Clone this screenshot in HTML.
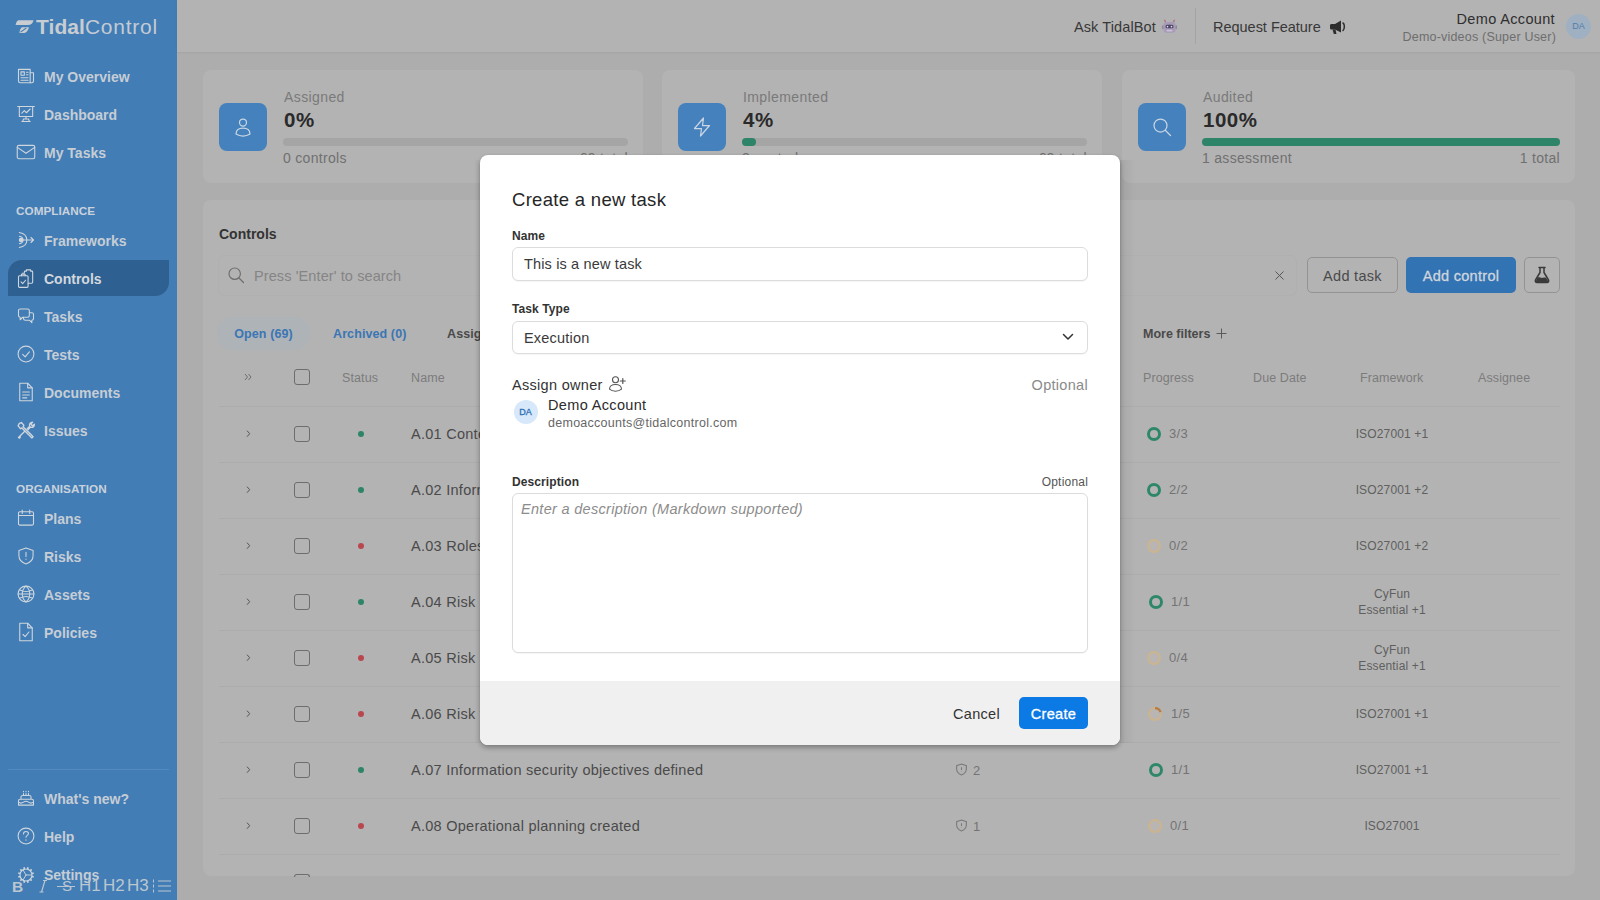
<!DOCTYPE html>
<html><head><meta charset="utf-8">
<style>
*{box-sizing:border-box;margin:0;padding:0}
html,body{width:1600px;height:900px;overflow:hidden}
body{font-family:"Liberation Sans",sans-serif;background:#adadad;position:relative;color:#2b2b2b}
.abs{position:absolute}
/* sidebar */
#side{position:absolute;left:0;top:0;width:177px;height:900px;background:#427db5}
.nav{position:absolute;left:0;width:177px;height:36px;color:#c6cdd5;font-weight:bold;font-size:14px;line-height:36px;padding-left:44px;letter-spacing:0}
.nav svg{position:absolute;left:16px;top:7px;width:20px;height:20px;stroke:#cfd6de;fill:none;stroke-width:1.3;stroke-linecap:round;stroke-linejoin:round}
.nav.act{left:8px;width:161px;background:#2e6091;border-radius:14px 0 14px 0;padding-left:36px;color:#d3d8de;line-height:38px}
.nav.act svg{left:8px}
.sec{position:absolute;left:16px;color:#c9d2dc;font-weight:bold;font-size:11.7px;letter-spacing:.05px}
/* header */
#hdr{position:absolute;left:177px;top:0;width:1423px;height:52px;background:#b3b3b3;box-shadow:0 1px 2px rgba(0,0,0,.06)}
.card{position:absolute;background:#b3b3b3;border-radius:8px}
.ib{position:absolute;width:48px;height:48px;border-radius:8px;background:#4481bd}
.ib svg{position:absolute;left:12px;top:12px;width:24px;height:24px;stroke:#c9d6e3;fill:none;stroke-width:1.25;stroke-linecap:round;stroke-linejoin:round}
.lbl{position:absolute;font-size:14px;color:#7a7a7a;letter-spacing:.4px;margin:1px 0 0 1px}
.pct{position:absolute;font-size:20.5px;font-weight:bold;color:#2a2a2a;letter-spacing:.5px;margin:0 0 0 1px}
.bar{position:absolute;height:8px;border-radius:4px;background:#a5a5a5}
.bar i{position:absolute;left:0;top:0;height:8px;border-radius:4px;background:#2e8468}
.sub{position:absolute;font-size:14px;color:#707070;letter-spacing:.3px;margin-top:.4px}
.th{position:absolute;font-size:12.5px;color:#7c7c7c;top:371px;letter-spacing:.1px}
.row{position:absolute;left:219px;width:1341px;height:1px;background:#acacac}
.cb{position:absolute;left:294px;width:16px;height:16px;border:1.2px solid #6d6d6d;border-radius:3px}
.chev{position:absolute;left:245px;font-size:11px;color:#555}
.dot{position:absolute;left:358px;width:6px;height:6px;border-radius:3px}
.g{background:#2e8468}.r{background:#b8474e}
.nm{position:absolute;left:411px;font-size:14.5px;color:#4a4a4a;letter-spacing:.27px;margin-top:1px}
.pg{position:absolute;left:1170px;font-size:13px;color:#737373;letter-spacing:.3px;margin-top:.4px}
.fw{position:absolute;left:1330px;width:124px;text-align:center;font-size:12px;color:#5f5f5f;line-height:16px;letter-spacing:.15px}
.ring{position:absolute;width:14px;height:14px;border-radius:50%;border:3px solid #2e8769}
.ring.o{border-color:#ccb48e;border-width:2.5px;background:#b9b5b2}
/* modal */
#modal{position:absolute;left:480px;top:155px;width:640px;height:590px;background:#fff;border-radius:8px;box-shadow:0 3px 5px rgba(0,0,0,.28),0 0 2px rgba(0,0,0,.08);overflow:hidden}
#mfoot{position:absolute;left:0;top:526px;width:640px;height:64px;background:#f0f0f0}
.ml{position:absolute;left:32px;font-size:12px;font-weight:bold;color:#333;letter-spacing:.1px}
.inp{position:absolute;left:32px;width:576px;border:1px solid #dcdcdc;border-radius:6px;background:#fff;box-shadow:0 1px 1px rgba(0,0,0,.04)}
</style></head><body>
<div id="side">
<svg class="abs" style="left:15px;top:19px" width="19" height="16" viewBox="0 0 18 16" preserveAspectRatio="none"><path d="M3.2 1.2h14.3c-.5 3-2.3 4.8-5.3 4.8H.6C1 3.6 1.6 1.9 3.2 1.2z" fill="#c9cdd2"/><path d="M6.6 8.2h6.6c-.7 3.4-2.6 5.9-5.6 5.9H4.2c.2-2.6 1-4.9 2.4-5.9z" fill="#c9cdd2"/><path d="M5.2 13.2l5.5-4.2" stroke="#427db5" stroke-width="1"/></svg>
<div class="abs" style="left:36px;top:15px;font-size:21px;line-height:24px;color:#c9cdd2;letter-spacing:-.2px;white-space:nowrap"><b style="letter-spacing:.05px">Tidal</b><span style="font-weight:normal;letter-spacing:.75px;color:#c3cbd4">Control</span></div>

<div class="nav" style="top:59px"><svg viewBox="0 0 24 24"><path d="M3 4h14v16H5a2 2 0 0 1-2-2z"/><path d="M17 8h4v10a2 2 0 0 1-2 2h-2"/><rect x="6" y="7" width="4" height="4"/><path d="M12.5 7.5h2M12.5 10.5h2M6 14h8.5M6 17h8.5"/></svg>My Overview</div>
<div class="nav" style="top:97px"><svg viewBox="0 0 24 24"><path d="M2 3h20M4 3v12h16V3M12 15v3M8 21l1-3h6l1 3M7 21h10"/><path d="M7 11l3-3 2.5 2.5L17 6"/></svg>Dashboard</div>
<div class="nav" style="top:135px"><svg viewBox="0 0 24 24"><rect x="1.5" y="4" width="21" height="16" rx="2"/><path d="M1.5 6.5l10.5 7 10.5-7"/></svg>My Tasks</div>

<div class="sec" style="top:204px">COMPLIANCE</div>
<div class="nav" style="top:223px"><svg viewBox="0 0 24 24"><path d="M8 12h13M18 9l3 3-3 3"/><circle cx="6" cy="12" r="2" fill="#cfd6de"/><path d="M4 3c6 1 9 4 9 9s-3 8-9 9"/><path d="M4 7.5c3 .5 4.5 2 4.5 4.500s-1.500 4-4.500 4.500"/></svg>Frameworks</div>
<div class="nav act" style="top:260px"><svg viewBox="0 0 24 24" style="top:9px"><rect x="3" y="8" width="11.5" height="14" rx="1.2"/><path d="M6.5 8V6.300h4.5V8"/><path d="M6 15.5l2 2 3.5-4"/><path d="M9 5h-1.5M10 5V3.5c0-.6.400-1 1-1h1.5M12.5 2.5V1h5v1.5M17.5 2.5H19c.6 0 1 .4 1 1V16c0 .6-.4 1-1 1h-4.5"/></svg>Controls</div>
<div class="nav" style="top:299px"><svg viewBox="0 0 24 24"><path d="M3 5.500a2 2 0 0 1 2-2h9a2 2 0 0 1 2 2v6a2 2 0 0 1-2 2H8l-3 3v-3a2 2 0 0 1-2-2z"/><path d="M16 8h3a2 2 0 0 1 2 2v5a2 2 0 0 1-2 2v3l-3-3h-5a2 2 0 0 1-2-2v-1.500"/></svg>Tasks</div>
<div class="nav" style="top:337px"><svg viewBox="0 0 24 24"><circle cx="12" cy="12" r="9.500"/><path d="M8 12.500l3 3 5-6"/></svg>Tests</div>
<div class="nav" style="top:375px"><svg viewBox="0 0 24 24"><path d="M4.500 1.500h9.500l5.500 5.500V22.500H4.500z"/><path d="M14 1.500V7h5.500M8 12h8M8 15.500h8M8 19h5"/></svg>Documents</div>
<div class="nav" style="top:413px"><svg viewBox="0 0 24 24" style="stroke-width:1.6"><path d="M4 4l2.500-1 3 3.500-1 1.500 9.500 9.500 2.500 2.500-1.500 1.500-2.500-2.500L7 9.500l-1.500 1L2.500 7z"/><path d="M3 21l7.500-7.500M13.500 10.500l3-3c-1-2.500.5-5 3.500-5l-2 2.500 1.500 2 2.500-2c.5 3-2 4.500-4.500 3.500l-3 3M3 21c1 1.500 2.500 0 2-1"/></svg>Issues</div>

<div class="sec" style="top:482px">ORGANISATION</div>
<div class="nav" style="top:501px"><svg viewBox="0 0 24 24"><rect x="3" y="4.500" width="18" height="16" rx="1.500"/><path d="M3 9h18M7.500 2.500v4M16.500 2.500v4"/></svg>Plans</div>
<div class="nav" style="top:539px"><svg viewBox="0 0 24 24"><path d="M12 2.500l8.500 3v6c0 5-3.500 8.500-8.500 10-5-1.500-8.500-5-8.500-10v-6z"/><path d="M12 7.500v5M12 15.500v.5"/></svg>Risks</div>
<div class="nav" style="top:577px"><svg viewBox="0 0 24 24"><circle cx="12" cy="12" r="9.500"/><path d="M2.500 12h19M12 2.500c-6 5-6 14 0 19M12 2.500c6 5 6 14 0 19M4 7c5 2.500 11 2.500 16 0M4 17c5-2.500 11-2.500 16 0"/></svg>Assets</div>
<div class="nav" style="top:615px"><svg viewBox="0 0 24 24"><path d="M4.500 1.500h9.500l5.500 5.500V22.500H4.500z"/><path d="M14 1.500V7h5.500M8.500 15l2.500 2.500 4.500-5.500"/></svg>Policies</div>

<div class="abs" style="left:8px;top:769px;width:161px;height:1px;background:#5289be"></div>
<div class="nav" style="top:781px"><svg viewBox="0 0 24 24"><path d="M3 20.500h18v-5c0-1-1-2-2-2H5c-1 0-2 1-2 2zM6 13.500v-3c0-1 1-1.500 2-1.500h8c1 0 2 .5 2 1.500v3M3 17c2 1.500 4 1.500 6 0s4-1.500 6 0 4 1.500 6 0M9 6.500v2.500M12 6.500v2.500M15 6.500v2.500M9 4v.5M12 4v.5M15 4v.5"/></svg>What's new?</div>
<div class="nav" style="top:819px"><svg viewBox="0 0 24 24"><circle cx="12" cy="12" r="9.500"/><path d="M9 9.500c0-2 1.500-3 3-3s3 1 3 2.500c0 2-3 2.500-3 4.500M12 16.500v.5"/></svg>Help</div>
<div class="nav" style="top:857px"><svg viewBox="0 0 24 24" style="top:8px"><circle cx="12" cy="12" r="7.2"/><path d="M19.15 13.92L21.27 14.48M17.23 17.23L18.79 18.79M13.92 19.15L14.48 21.27M10.08 19.15L9.52 21.27M6.77 17.23L5.21 18.79M4.85 13.92L2.73 14.48M4.85 10.08L2.73 9.52M6.77 6.77L5.21 5.21M10.08 4.85L9.52 2.73M13.92 4.85L14.48 2.73M17.23 6.77L18.79 5.21M19.15 10.08L21.27 9.52" stroke-width="1.9" stroke-linecap="butt"/><path d="M12 12L8.500 6M12 12h7M12 12l-3.500 6" stroke-width="1.100"/></svg>Settings</div>

<div class="abs" style="left:12px;top:875px;height:22px;line-height:22px;color:#bcc6d0;font-size:17px;white-space:nowrap"><b style="position:absolute;left:0;font-size:15.500px;top:.5px">B</b>
<svg style="position:absolute;left:25px;top:3px" width="12" height="16" viewBox="0 0 12 16" stroke="#bcc6d0" fill="none" stroke-width="1.200"><path d="M4.500 14L8 2.500M2.500 14h4M6 2.500h4"/></svg>
<span style="position:absolute;left:50px;font-size:15px">S</span><span style="position:absolute;left:45px;top:10.500px;width:18px;height:1.200px;background:#bcc6d0"></span>
<span style="position:absolute;left:67px">H1</span><span style="position:absolute;left:91px">H2</span><span style="position:absolute;left:115px">H3</span>
<svg style="position:absolute;left:140px;top:3px" width="20" height="16" viewBox="0 0 20 16" stroke="#bcc6d0" fill="none" stroke-width="1.200"><path d="M6 3h13M6 8h13M6 13h13"/><path d="M1.500 1.500v3M1.500 6.500v3M1.500 11.500v3" stroke-width="1"/></svg></div>
</div>
<div id="hdr">
<div class="abs" style="left:897px;top:17px;font-size:14.5px;line-height:20px;color:#383838;letter-spacing:.1px;white-space:nowrap">Ask TidalBot</div>
<svg class="abs" style="left:984px;top:18px" width="17" height="18" viewBox="0 0 17 16" preserveAspectRatio="none"><rect x="2.500" y="3.500" width="12" height="9.500" rx="3" fill="#a79bb8"/><rect x="4.500" y="6" width="8" height="3.200" rx="1.500" fill="#4a4560"/><circle cx="6.500" cy="7.600" r=".8" fill="#e8d8f0"/><circle cx="10.500" cy="7.600" r=".8" fill="#e8d8f0"/><rect x="1" y="6.500" width="1.500" height="3.500" rx=".7" fill="#8f86a6"/><rect x="14.500" y="6.500" width="1.500" height="3.500" rx=".7" fill="#8f86a6"/><path d="M4.500 3.500L3.500 1.500M12.500 3.500l1-2" stroke="#b06a7a" stroke-width="1.200"/><rect x="5.500" y="10.500" width="6" height="1.500" rx=".7" fill="#c9bfd6"/></svg>
<div class="abs" style="left:1018px;top:8px;width:1px;height:36px;background:#a4a4a4"></div>
<div class="abs" style="left:1036px;top:17px;font-size:14.5px;line-height:20px;color:#383838;letter-spacing:-.02px;white-space:nowrap">Request Feature</div>
<svg class="abs" style="left:1152px;top:19px" width="18" height="16" viewBox="0 0 18 16"><path d="M1 6.500c0-1 .7-1.500 1.500-1.500H6l6-3.500v12L6 10.500H2.500C1.700 10.500 1 10 1 9z" fill="#2d2d2d"/><path d="M3.500 10.500h3l1 4.500h-2.700z" fill="#2d2d2d"/><path d="M14 4c1.800 1 1.800 6 0 7.500" stroke="#2d2d2d" stroke-width="1.500" fill="none" stroke-linecap="round"/></svg>
<div class="abs" style="right:45px;top:10px;font-size:14.5px;line-height:18px;color:#2e2e2e;letter-spacing:.35px;white-space:nowrap;text-align:right">Demo Account</div>
<div class="abs" style="right:44px;top:28px;font-size:12.5px;line-height:18px;color:#6e6e6e;letter-spacing:.2px;white-space:nowrap;text-align:right">Demo-videos (Super User)</div>
<div class="abs" style="left:1389px;top:14px;width:25px;height:25px;border-radius:50%;background:#9eb0c1;color:#527ea9;font-size:9px;line-height:25px;text-align:center;letter-spacing:0">DA</div>
</div>
<div id="main"><div class="card" style="left:203px;top:70px;width:440px;height:113px">
<div class="ib" style="left:16px;top:33px"><svg viewBox="0 0 24 24"><circle cx="12" cy="7.500" r="3.500"/><path d="M5 19c0-4 3-6 7-6s7 2 7 6c-2 1.300-4.500 2-7 2s-5-.7-7-2z"/></svg></div>
<div class="lbl" style="left:80px;top:18px">Assigned</div>
<div class="pct" style="left:80px;top:38px">0%</div>
<div class="bar" style="left:80px;top:68px;width:345px"><i style="width:0"></i></div>
<div class="sub" style="left:80px;top:80px">0 controls</div>
<div class="sub" style="right:15px;top:80px">69 total</div>
</div><div class="card" style="left:662px;top:70px;width:440px;height:113px">
<div class="ib" style="left:16px;top:33px"><svg viewBox="0 0 24 24"><path d="M13.500 3L4.500 13.500h7L10.500 21l9-10.500h-7z"/></svg></div>
<div class="lbl" style="left:80px;top:18px">Implemented</div>
<div class="pct" style="left:80px;top:38px">4%</div>
<div class="bar" style="left:80px;top:68px;width:345px"><i style="width:14px"></i></div>
<div class="sub" style="left:80px;top:80px">3 controls</div>
<div class="sub" style="right:15px;top:80px">69 total</div>
</div><div class="card" style="left:1122px;top:70px;width:453px;height:113px">
<div class="ib" style="left:16px;top:33px"><svg viewBox="0 0 24 24"><circle cx="10.500" cy="10.500" r="6.500"/><path d="M15.500 15.500l5 5"/></svg></div>
<div class="lbl" style="left:80px;top:18px">Audited</div>
<div class="pct" style="left:80px;top:38px">100%</div>
<div class="bar" style="left:80px;top:68px;width:358px"><i style="width:100%"></i></div>
<div class="sub" style="left:80px;top:80px">1 assessment</div>
<div class="sub" style="right:15px;top:80px">1 total</div>
</div>
<div class="card" style="left:203px;top:200px;width:1372px;height:676px;overflow:hidden">
<div class="abs" style="left:16px;top:26px;font-size:14px;font-weight:bold;color:#333;letter-spacing:0">Controls</div>
<div class="abs" style="left:16px;top:56px;width:1077px;height:39px;border-radius:6px;background:#b3b3b3;box-shadow:0 0 0 1px #b0b0b0,0 -1px 0 0 #adadad"></div>
<svg class="abs" style="left:24px;top:66px" width="18" height="18" viewBox="0 0 18 18" fill="none" stroke="#6f6f6f" stroke-width="1.200" stroke-linecap="round"><circle cx="7.700" cy="7.700" r="5.700"/><path d="M12 12l4.500 4.500"/></svg>
<div class="abs" style="left:51px;top:68px;font-size:14.5px;color:#858585;letter-spacing:.1px">Press 'Enter' to search</div>
<svg class="abs" style="left:1072px;top:71px" width="9" height="9" viewBox="0 0 9 9" stroke="#555" stroke-width="1" fill="none"><path d="M.5.500l8 8M8.500.500l-8 8"/></svg>
<div class="abs" style="left:1104px;top:57px;width:91px;height:36px;border:1px solid #939393;border-radius:5px;font-size:14.5px;line-height:36px;text-align:center;color:#4a4a4a;letter-spacing:.3px">Add task</div>
<div class="abs" style="left:1203px;top:57px;width:110px;height:36px;border-radius:5px;background:#3273b4;font-size:14.5px;line-height:38px;text-align:center;color:#d0d6dc;letter-spacing:.3px;-webkit-text-stroke:.3px #d0d6dc">Add control</div>
<div class="abs" style="left:1321px;top:57px;width:36px;height:36px;border:1px solid #939393;border-radius:5px"></div>
<svg class="abs" style="left:1330px;top:66px" width="18" height="18" viewBox="0 0 18 18"><path d="M6 1.500h6M7 1.500v5L2.500 14c-.6 1.200 0 2.500 1.500 2.500h10c1.500 0 2.100-1.300 1.500-2.500L11 6.500v-5" fill="none" stroke="#3a3a3a" stroke-width="1.500" stroke-linejoin="round" stroke-linecap="round"/><path d="M4.500 11.500c2-1 3.500 1 5.500.3 1-.4 2-.6 3 0l2 3c.4.800 0 1.500-1 1.500H4c-1 0-1.400-.7-1-1.500z" fill="#3a3a3a"/></svg>

<div class="abs" style="left:15px;top:118px;width:91px;height:31px;border-radius:16px;background:#aeb3b8;box-shadow:0 0 3px 1px #aeb3b8;font-size:12.5px;font-weight:bold;color:#3b76b4;line-height:33px;text-align:center;letter-spacing:.1px">Open (69)</div>
<div class="abs" style="left:130px;top:118px;font-size:12.5px;font-weight:bold;color:#3b76b4;line-height:33px;letter-spacing:.1px">Archived (0)</div>
<div class="abs" style="left:244px;top:118px;font-size:12.5px;font-weight:bold;color:#4a4a4a;line-height:33px;letter-spacing:.1px">Assigned to me</div>
<div class="abs" style="left:940px;top:118px;font-size:12.5px;font-weight:bold;color:#4a4a4a;line-height:33px;letter-spacing:0;white-space:nowrap">More filters</div>
<svg class="abs" style="left:1013px;top:128px" width="11" height="11" viewBox="0 0 11 11" stroke="#5a5a5a" stroke-width="1" fill="none"><path d="M5.500.500v10M.500 5.500h10"/></svg>
</div>
<svg class="abs" style="left:244px;top:373px" width="8" height="8" viewBox="0 0 8 8" fill="none" stroke="#666" stroke-width=".9"><path d="M1 1l2.500 3L1 7M4.500 1L7 4 4.500 7"/></svg>
<div class="cb" style="top:369px"></div>
<div class="th" style="left:342px">Status</div><div class="th" style="left:411px">Name</div><div class="th" style="left:1143px">Progress</div><div class="th" style="left:1253px">Due Date</div><div class="th" style="left:1360px">Framework</div><div class="th" style="left:1478px">Assignee</div>
<div class="row" style="top:406px"></div><svg class="abs" style="left:246px;top:430px" width="5" height="8" viewBox="0 0 5 8" fill="none" stroke="#555" stroke-width="1"><path d="M1 1l2.700 3L1 7" transform="translate(0,-.3)"/></svg><div class="cb" style="top:426px"></div><div class="dot g" style="top:431px"></div><div class="nm" style="top:425px">A.01 Context of the organisation</div><div class="ring" style="left:1147px;top:427px"></div><div class="pg" style="left:1169px;top:426px">3/3</div><div class="fw" style="top:426px">ISO27001 +1</div><div class="row" style="top:462px"></div><svg class="abs" style="left:246px;top:486px" width="5" height="8" viewBox="0 0 5 8" fill="none" stroke="#555" stroke-width="1"><path d="M1 1l2.700 3L1 7" transform="translate(0,-.3)"/></svg><div class="cb" style="top:482px"></div><div class="dot g" style="top:487px"></div><div class="nm" style="top:481px">A.02 Information security policy</div><div class="ring" style="left:1147px;top:483px"></div><div class="pg" style="left:1169px;top:482px">2/2</div><div class="fw" style="top:482px">ISO27001 +2</div><div class="row" style="top:518px"></div><svg class="abs" style="left:246px;top:542px" width="5" height="8" viewBox="0 0 5 8" fill="none" stroke="#555" stroke-width="1"><path d="M1 1l2.700 3L1 7" transform="translate(0,-.3)"/></svg><div class="cb" style="top:538px"></div><div class="dot r" style="top:543px"></div><div class="nm" style="top:537px">A.03 Roles and responsibilities</div><div class="ring o" style="left:1147px;top:539px"></div><div class="pg" style="left:1169px;top:538px">0/2</div><div class="fw" style="top:538px">ISO27001 +2</div><div class="row" style="top:574px"></div><svg class="abs" style="left:246px;top:598px" width="5" height="8" viewBox="0 0 5 8" fill="none" stroke="#555" stroke-width="1"><path d="M1 1l2.700 3L1 7" transform="translate(0,-.3)"/></svg><div class="cb" style="top:594px"></div><div class="dot g" style="top:599px"></div><div class="nm" style="top:593px">A.04 Risk management</div><div class="ring" style="left:1149px;top:595px"></div><div class="pg" style="left:1171px;top:594px">1/1</div><div class="fw" style="top:586px">CyFun<br>Essential +1</div><div class="row" style="top:630px"></div><svg class="abs" style="left:246px;top:654px" width="5" height="8" viewBox="0 0 5 8" fill="none" stroke="#555" stroke-width="1"><path d="M1 1l2.700 3L1 7" transform="translate(0,-.3)"/></svg><div class="cb" style="top:650px"></div><div class="dot r" style="top:655px"></div><div class="nm" style="top:649px">A.05 Risk assessment</div><div class="ring o" style="left:1147px;top:651px"></div><div class="pg" style="left:1169px;top:650px">0/4</div><div class="fw" style="top:642px">CyFun<br>Essential +1</div><div class="row" style="top:686px"></div><svg class="abs" style="left:246px;top:710px" width="5" height="8" viewBox="0 0 5 8" fill="none" stroke="#555" stroke-width="1"><path d="M1 1l2.700 3L1 7" transform="translate(0,-.3)"/></svg><div class="cb" style="top:706px"></div><div class="dot r" style="top:711px"></div><div class="nm" style="top:705px">A.06 Risk treatment</div><div class="ring o" style="left:1148px;top:707px"></div><svg class="abs" style="left:1148px;top:707px" width="14" height="14" viewBox="0 0 14 14" fill="none" stroke="#b97b42" stroke-width="2.300"><path d="M7 1.150a5.850 5.850 0 0 1 5.560 4.040"/></svg><div class="pg" style="left:1171px;top:706px">1/5</div><div class="fw" style="top:706px">ISO27001 +1</div><div class="row" style="top:742px"></div><svg class="abs" style="left:246px;top:766px" width="5" height="8" viewBox="0 0 5 8" fill="none" stroke="#555" stroke-width="1"><path d="M1 1l2.700 3L1 7" transform="translate(0,-.3)"/></svg><div class="cb" style="top:762px"></div><div class="dot g" style="top:767px"></div><div class="nm" style="top:761px">A.07 Information security objectives defined</div><div class="ring" style="left:1149px;top:763px"></div><div class="pg" style="left:1171px;top:762px">1/1</div><div class="fw" style="top:762px">ISO27001 +1</div><div class="row" style="top:798px"></div><svg class="abs" style="left:246px;top:822px" width="5" height="8" viewBox="0 0 5 8" fill="none" stroke="#555" stroke-width="1"><path d="M1 1l2.700 3L1 7" transform="translate(0,-.3)"/></svg><div class="cb" style="top:818px"></div><div class="dot r" style="top:823px"></div><div class="nm" style="top:817px">A.08 Operational planning created</div><div class="ring o" style="left:1148px;top:819px"></div><div class="pg" style="left:1170px;top:818px">0/1</div><div class="fw" style="top:818px">ISO27001</div><div class="row" style="top:854px"></div><div class="cb" style="top:874px;height:3px;border-bottom:0;border-radius:3px 3px 0 0"></div><svg class="abs" style="left:955px;top:763px" width="13" height="13" viewBox="0 0 12 12" fill="none" stroke="#7a7a7a" stroke-width="1"><path d="M6 1l4.500 1.500v3c0 2.500-2 4.500-4.500 5.500C3.500 10 1.500 8 1.500 5.500v-3z"/><path d="M6 4v2.500M6 8v.3"/></svg><div class="pg" style="left:973px;top:763px;font-size:13px">2</div><svg class="abs" style="left:955px;top:819px" width="13" height="13" viewBox="0 0 12 12" fill="none" stroke="#7a7a7a" stroke-width="1"><path d="M6 1l4.500 1.500v3c0 2.500-2 4.500-4.500 5.500C3.500 10 1.500 8 1.500 5.500v-3z"/><path d="M6 4v2.500M6 8v.3"/></svg><div class="pg" style="left:973px;top:819px;font-size:13px">1</div></div>
<div class="abs" style="left:1120px;top:160px;width:16px;height:583px;background:linear-gradient(90deg,rgba(0,0,0,.07),rgba(0,0,0,.03) 50%,rgba(0,0,0,0))"></div><div class="abs" style="left:473px;top:160px;width:7px;height:583px;background:linear-gradient(270deg,rgba(0,0,0,.035),rgba(0,0,0,0))"></div>
<div id="modal">
<div class="abs" style="left:32px;top:33px;font-size:18.500px;line-height:24px;color:#262626;letter-spacing:.3px;white-space:nowrap">Create a new task</div>
<div class="ml" style="top:74px">Name</div>
<div class="inp" style="top:92px;height:34px"></div>
<div class="abs" style="left:44px;top:100px;font-size:14.500px;line-height:18px;color:#3a3a3a;letter-spacing:.15px;white-space:nowrap">This is a new task</div>
<div class="ml" style="top:147px">Task Type</div>
<div class="inp" style="top:166px;height:33px"></div>
<div class="abs" style="left:44px;top:174px;font-size:14.500px;line-height:18px;color:#3a3a3a;letter-spacing:.2px">Execution</div>
<svg class="abs" style="left:582px;top:178px" width="12" height="8" viewBox="0 0 12 8" fill="none" stroke="#333" stroke-width="1.500" stroke-linecap="round" stroke-linejoin="round"><path d="M1.500 1.500L6 6l4.500-4.500"/></svg>
<div class="abs" style="left:32px;top:220px;font-size:14.500px;line-height:20px;color:#333;letter-spacing:.3px;white-space:nowrap">Assign owner</div>
<svg class="abs" style="left:128px;top:220px" width="18" height="18" viewBox="0 0 18 18" fill="none" stroke="#555" stroke-width="1.100" stroke-linecap="round" stroke-linejoin="round"><circle cx="7.500" cy="4.800" r="3"/><path d="M1.500 14.200c0-2.800 2.500-4.700 6-4.700s6 1.900 6 4.700c-1.500 1.300-3.800 2-6 2s-4.500-.7-6-2z"/><path d="M14.800 3.500v5M12.300 6h5" stroke-width="1.200"/></svg>
<div class="abs" style="right:32px;top:220px;font-size:14.500px;line-height:20px;color:#8a8a8a;letter-spacing:.3px">Optional</div>
<div class="abs" style="left:33.500px;top:244.500px;width:24px;height:24px;border-radius:50%;background:#d6e8fa;color:#2e6fb5;font-size:9px;line-height:24px;-webkit-text-stroke:.3px #2e6fb5;text-align:center">DA</div>
<div class="abs" style="left:68px;top:240px;font-size:14.500px;line-height:20px;color:#2c2c2c;letter-spacing:.35px;white-space:nowrap">Demo Account</div>
<div class="abs" style="left:68px;top:259px;font-size:12.500px;line-height:18px;color:#666;letter-spacing:.27px;white-space:nowrap">demoaccounts@tidalcontrol.com</div>
<div class="ml" style="top:320px">Description</div>
<div class="abs" style="right:32px;top:320px;font-size:12px;color:#555;letter-spacing:.2px">Optional</div>
<div class="inp" style="top:338px;height:160px"></div>
<div class="abs" style="left:41px;top:345px;font-size:14.500px;line-height:18px;color:#8c8c8c;font-style:italic;letter-spacing:.3px;white-space:nowrap">Enter a description (Markdown supported)</div>
<div id="mfoot"></div>
<div class="abs" style="left:473px;top:550px;font-size:14.500px;line-height:18px;color:#333;letter-spacing:.3px">Cancel</div>
<div class="abs" style="left:539px;top:542px;width:69px;height:32px;border-radius:5px;background:#0b7ae4;color:#fff;font-size:14.500px;line-height:34px;text-align:center;letter-spacing:.3px;-webkit-text-stroke:.3px #fff">Create</div>
</div>
</body></html>
